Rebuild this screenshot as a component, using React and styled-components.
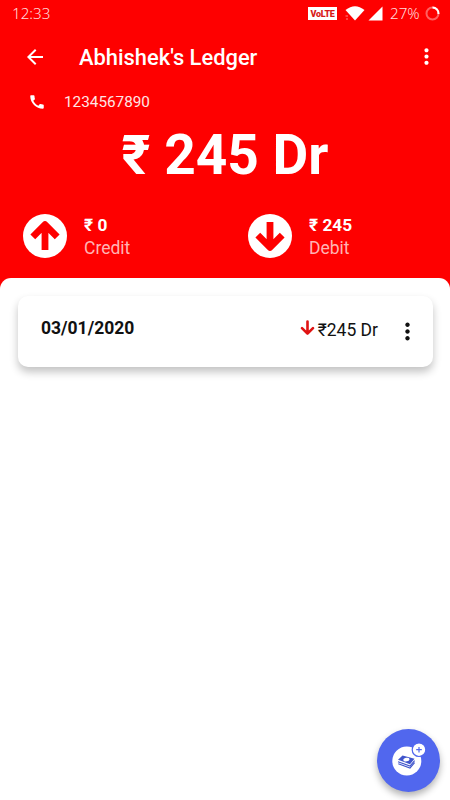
import React from 'react';
import styled, {createGlobalStyle} from 'styled-components';
import {MdArrowBack, MdCall, MdMoreVert} from 'react-icons/md';

const RED = '#fe0000';

const GlobalStyle = createGlobalStyle`
    * {
        box-sizing: border-box;
    }

    body {
        margin: 0;
        background: #fff;
        font-family: Roboto, "Noto Sans", sans-serif;
    }
`;

const Screen = styled.div`
    display: flex;
    flex-direction: column;
    width: 450px;
    height: 800px;
    overflow: hidden;
    background: ${RED};
    color: #fff;
`;

const StatusBar = styled.div`
    display: flex;
    align-items: center;
    height: 27px;
    padding: 0 10px 0 12px;
    font-family: "Noto Sans", sans-serif;
    font-size: 15.2px;
    font-weight: 300;
    line-height: 27px;
    color: #ffdcdc;
`;

const Clock = styled.span`
    flex: 1;
`;

const VolteBadge = styled.span`
    width: 29px;
    height: 13px;
    margin-right: 8px;
    background: #fff;
    color: #d81818;
    font-family: Roboto, sans-serif;
    font-size: 9px;
    font-weight: 900;
    line-height: 14px;
    letter-spacing: -0.3px;
    text-align: center;
`;

const BatteryText = styled.span`
    width: 31px;
    margin: 0 4px 0 7px;
    white-space: nowrap;
`;

const AppBar = styled.header`
    display: flex;
    align-items: center;
    height: 59px;
    padding: 0 11px 0 23px;
`;

const Title = styled.h1`
    flex: 1;
    margin: 2px 0 0 32px;
    font-size: 21.9px;
    font-weight: 500;
    line-height: 28px;
`;

const Phone = styled.div`
    display: flex;
    align-items: center;
    gap: 18px;
    height: 32px;
    padding-left: 28px;
    font-size: 15.3px;
    color: #ffe6e6;
`;

const Balance = styled.div`
    height: 76px;
    font-size: 55px;
    font-weight: 700;
    line-height: 75px;
    text-align: center;
`;

const Totals = styled.div`
    display: grid;
    grid-template-columns: 225px 225px;
    height: 84px;
    padding-top: 19px;
`;

const Total = styled.div`
    display: flex;
    align-items: flex-start;
    gap: 16px;
    padding-left: 22px;
`;

const TotalAmount = styled.div`
    margin-top: 1px;
    font-size: 17.3px;
    font-weight: 700;
    line-height: 23px;
`;

const TotalLabel = styled.div`
    font-size: 17.5px;
    line-height: 22px;
    color: #ffb4b4;
`;

const Sheet = styled.main`
    flex: 1;
    padding: 18px 17px 0 18px;
    border-radius: 11px 11px 0 0;
    background: #fff;
`;

const Entry = styled.div`
    display: flex;
    align-items: center;
    height: 71px;
    padding: 0 12px 0 23px;
    border-radius: 10px;
    background: #fff;
    color: #111;
    box-shadow: 0 5px 9px rgba(0, 0, 0, 0.24);
`;

const EntryDate = styled.div`
    flex: 1;
    margin-top: -7px;
    font-size: 17.5px;
    font-weight: 700;
`;

const EntryAmount = styled.div`
    display: flex;
    align-items: center;
    gap: 3px;
    margin: -4px 16px 0 0;
    font-size: 17.5px;
`;

const EntryMenu = styled(MdMoreVert)`
    margin-top: -1px;
`;

const EntryArrow = styled.svg`
    margin-top: -3px;
`;

const AddButton = styled.button`
    position: absolute;
    top: 729px;
    left: 377px;
    width: 63px;
    height: 63px;
    padding: 0;
    border: 0;
    border-radius: 50%;
    background: #5167ee;
    box-shadow: 0 4px 7px rgba(0, 0, 0, 0.3);
`;

const WifiIcon = () => (
    <svg width='20' height='15' viewBox='0 0 20 15'>
        <path d='M0.5 4Q10 -3.6 19.5 4L10 14.5Z' fill='#fff'/>
        <path d='M0.5 10h2.5M1 13h2' stroke='#ff8080' strokeWidth='1'/>
    </svg>
);

const Signal = styled.svg`
    margin-left: 3px;
`;

const SignalIcon = () => (
    <Signal width='15' height='15' viewBox='0 0 15 15'>
        <path d='M14.5 0.5V14.5H0.5Z' fill='#fff'/>
    </Signal>
);

const BatteryIcon = () => (
    <svg width='15' height='15' viewBox='0 0 15 15'>
        <circle cx='7.5' cy='7.5' r='6' fill='none' stroke='#ff6060' strokeWidth='2'/>
        <path d='M7.5 1.5A6 6 0 0 1 13.5 8' fill='none' stroke='#fff' strokeWidth='2'/>
    </svg>
);

// One arrow drawing for both totals, flipped for the debit side.
const ArrowCircle = ({down}) => (
    <svg width='46' height='46' viewBox='0 0 46 46'>
        <circle cx='23' cy='23' r='22' fill='#fff'/>
        <path
            d='M23 37V14M10.8 23.8L23 11.6L35.2 23.8'
            fill='none'
            stroke={RED}
            strokeWidth='6.8'
            strokeLinejoin='round'
            transform={down ? 'rotate(180 23 23)' : undefined}
        />
    </svg>
);

const DebitArrow = () => (
    <EntryArrow width='15' height='16' viewBox='0 0 15 16'>
        <path
            d='M7.5 1.6V13.5M2 8.2L7.5 13.7L13 8.2'
            fill='none'
            stroke='#e01212'
            strokeWidth='2.6'
            strokeLinecap='round'
            strokeLinejoin='round'
        />
    </EntryArrow>
);

const AddMoneyIcon = () => (
    <svg width='63' height='63' viewBox='0 0 63 63'>
        <circle cx='29.8' cy='32' r='14.5' fill='#fff'/>
        <circle cx='42' cy='20.7' r='6.8' fill='#fff' stroke='#5167ee' strokeWidth='1.2'/>
        <path d='M42 17.9v5.6M39.2 20.7h5.6' stroke='#5167ee' strokeWidth='1.2'/>
        <path d='M25.5 26.5L37.5 29.8L33 35.2L21 30.8Z' fill='#4055cb'/>
        <ellipse cx='29.4' cy='30.6' rx='3.1' ry='1.8' fill='#fff' transform='rotate(-12 29.4 30.6)'/>
        <path
            d='M21 32.7L33 37.1L37.6 31.6M21.3 34.7L33 39.1L37.6 33.6'
            fill='none'
            stroke='#4055cb'
            strokeWidth='1.1'
        />
    </svg>
);

const totals = [
    {label: 'Credit', amount: '₹ 0', down: false},
    {label: 'Debit', amount: '₹ 245', down: true},
];

const App = () => {
    return (
        <Screen>
            <GlobalStyle/>
            <StatusBar>
                <Clock>{'12:33'}</Clock>
                <VolteBadge>{'VoLTE'}</VolteBadge>
                <WifiIcon/>
                <SignalIcon/>
                <BatteryText>{'27%'}</BatteryText>
                <BatteryIcon/>
            </StatusBar>
            <AppBar>
                <MdArrowBack size={24}/>
                <Title>{'Abhishek\'s Ledger'}</Title>
                <MdMoreVert size={25}/>
            </AppBar>
            <Phone>
                <MdCall size={18} color='#fff'/>
                <span>{'1234567890'}</span>
            </Phone>
            <Balance>{'₹ 245 Dr'}</Balance>
            <Totals>
                {totals.map(({label, amount, down}) => (
                    <Total key={label}>
                        <ArrowCircle down={down}/>
                        <div>
                            <TotalAmount>{amount}</TotalAmount>
                            <TotalLabel>{label}</TotalLabel>
                        </div>
                    </Total>
                ))}
            </Totals>
            <Sheet>
                <Entry>
                    <EntryDate>{'03/01/2020'}</EntryDate>
                    <EntryAmount>
                        <DebitArrow/>
                        <span>{'₹245 Dr'}</span>
                    </EntryAmount>
                    <EntryMenu size={27}/>
                </Entry>
            </Sheet>
            <AddButton>
                <AddMoneyIcon/>
            </AddButton>
        </Screen>
    );
};

export default App;
